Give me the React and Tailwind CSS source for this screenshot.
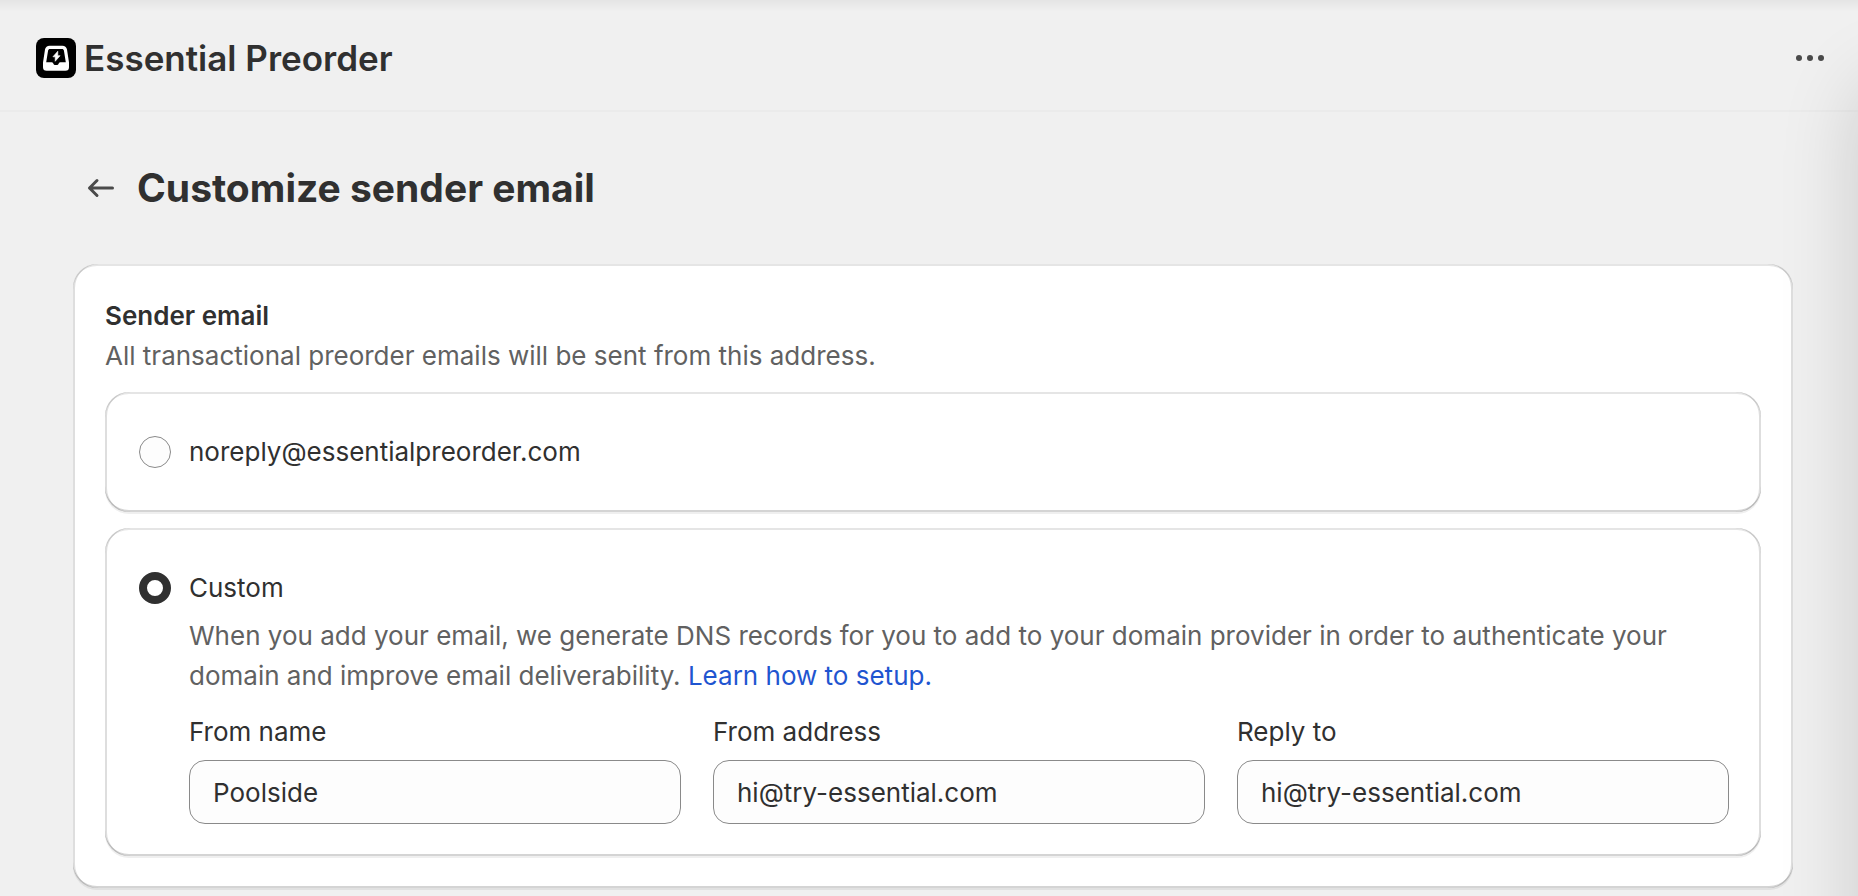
import React, { useState } from 'react';

const bevel =
  'shadow-[0_2px_0_0_rgba(26,26,26,0.07),inset_2px_0_0_0_rgba(0,0,0,0.13),inset_-2px_0_0_0_rgba(0,0,0,0.13),inset_0_-2px_0_0_rgba(0,0,0,0.17),inset_0_2px_0_0_rgba(204,204,204,0.5)]';

const AppLogo = () => (
  <svg viewBox="0 0 40 40" className="w-10 h-10" aria-hidden="true">
    <rect width="40" height="40" rx="8" fill="#000" />
    <path
      fill="#fff"
      fillRule="evenodd"
      d="M13.6 7.7h12.8c2.3 0 4.2 1.6 4.6 3.8L33 24.6v4.6a3.6 3.6 0 0 1-3.6 3.6H10.6A3.6 3.6 0 0 1 7 29.2v-4.6l2-13.1c.4-2.2 2.3-3.8 4.6-3.8ZM13.9 10.9c-.9 0-1.6.6-1.8 1.5L10.2 24.3h5.4c.7 0 1.3.4 1.6 1l.3.7c.3.6.8.9 1.4.9h2.2c.6 0 1.1-.3 1.4-.9l.3-.7c.3-.6.9-1 1.6-1h5.4l-1.9-11.9c-.2-.9-.9-1.5-1.8-1.5Z"
    />
    <path d="M21.8 13.2v4.5h2.3l-4.9 5.600v-4.500h-2.300Z" fill="#fff" stroke="#fff" strokeWidth="0.6" strokeLinejoin="round" />
  </svg>
);

const RadioOption = ({ id, label, checked, onChange }) => (
  <div className="flex items-center gap-[18px]">
    <input
      type="radio"
      id={id}
      name="sender"
      checked={checked}
      onChange={onChange}
      className="appearance-none shrink-0 w-8 h-8 rounded-full border border-[#8a8a8a] bg-[#fdfdfd] checked:border-8 checked:border-[#303030] checked:bg-white"
    />
    <label htmlFor={id}>{label}</label>
  </div>
);

const TextField = ({ id, label, defaultValue, type = 'text' }) => (
  <div className="flex flex-col gap-2 min-w-0">
    <label htmlFor={id}>{label}</label>
    <input
      id={id}
      type={type}
      defaultValue={defaultValue}
      className="w-full h-16 px-[23px] rounded-2xl border border-[#8a8a8a] bg-[#fdfdfd]"
    />
  </div>
);

export const App = () => {
  const [sender, setSender] = useState('custom');

  return (
    <div className="relative overflow-hidden min-h-screen bg-[#f0f0f0] text-[#303030] text-[26px] leading-10 font-['Inter',sans-serif]">
      {/* App bar */}
      <header className="flex items-center justify-between pt-[38px] pb-8 pl-9 pr-7 border-b-2 border-[#ebebeb]">
        <div className="flex items-center gap-2">
          <AppLogo />
          <span className="text-[35px] font-semibold">Essential Preorder</span>
        </div>
        <button type="button" aria-label="More actions" className="text-[#4a4a4a]">
          <svg viewBox="0 0 40 40" className="w-10 h-10" fill="currentColor">
            <circle cx="9" cy="20" r="3" />
            <circle cx="20" cy="20" r="3" />
            <circle cx="31" cy="20" r="3" />
          </svg>
        </button>
      </header>

      <main className="pt-14 pb-2 pl-[73px] pr-[65px]">
        {/* Page title */}
        <div className="flex items-center gap-4 pl-2 mb-14">
          <button type="button" aria-label="Back" className="text-[#4a4a4a]">
            <svg
              viewBox="0 0 20 20"
              className="w-10 h-10"
              fill="none"
              stroke="currentColor"
              strokeWidth="1.5"
              strokeLinecap="round"
              strokeLinejoin="round"
            >
              <path d="M15.75 10H4.25M8 6.25 4.25 10 8 13.75" />
            </svg>
          </button>
          <h1 className="text-[39px] font-bold">Customize sender email</h1>
        </div>

        <section className={`bg-white rounded-3xl p-8 ${bevel}`}>
          <h2 className="font-semibold">Sender email</h2>
          <p className="text-[#616161] mb-4">All transactional preorder emails will be sent from this address.</p>

          <div className="flex flex-col gap-4">
            <div className={`rounded-3xl pl-[34px] pr-8 py-10 ${bevel}`}>
              <RadioOption
                id="sender-default"
                label="noreply@essentialpreorder.com"
                checked={sender === 'default'}
                onChange={() => setSender('default')}
              />
            </div>

            <div className={`rounded-3xl pl-[34px] pr-8 pt-10 pb-8 ${bevel}`}>
              <RadioOption
                id="sender-custom"
                label="Custom"
                checked={sender === 'custom'}
                onChange={() => setSender('custom')}
              />
              <div className="pl-[50px] pt-2">
                <p className="text-[#616161] mb-4">
                  When you add your email, we generate DNS records for you to add to your domain provider in order to
                  authenticate your domain and improve email deliverability.{' '}
                  <a href="#setup" className="text-[#1f55d0]">Learn how to setup.</a>
                </p>
                <div className="grid grid-cols-3 gap-8">
                  <TextField id="from-name" label="From name" defaultValue="Poolside" />
                  <TextField id="from-address" label="From address" type="email" defaultValue="hi@try-essential.com" />
                  <TextField id="reply-to" label="Reply to" type="email" defaultValue="hi@try-essential.com" />
                </div>
              </div>
            </div>
          </div>
        </section>
      </main>

      {/* Window edge shading */}
      <div className="absolute pointer-events-none top-0 inset-x-0 h-3 bg-gradient-to-b from-black/5 to-transparent" />
      <div className="absolute pointer-events-none top-20 -bottom-40 left-full w-40 rounded-[40px] shadow-[0_0_80px_0_rgba(0,0,0,0.16)]" />
    </div>
  );
};

export default App;
